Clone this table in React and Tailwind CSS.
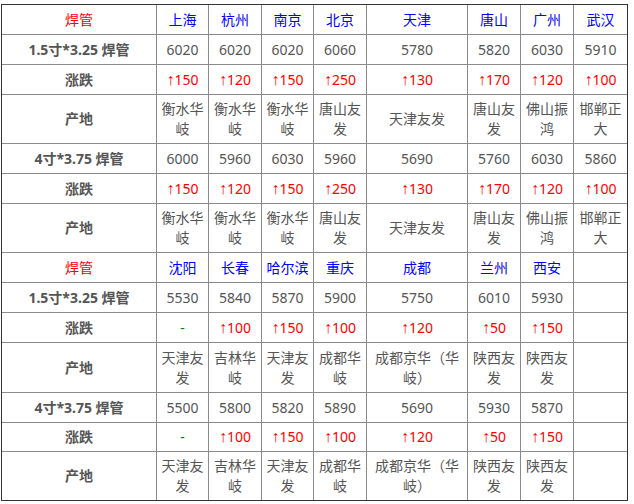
const cols = 'grid-cols-[155px_52px_53px_52px_53px_101px_53px_53px_53px]';

const rows = [
  { h: 'h-[30px]', type: 'head', cells: ['焊管', '上海', '杭州', '南京', '北京', '天津', '唐山', '广州', '武汉'] },
  { h: 'h-[30px]', type: 'val', cells: ['1.5寸*3.25 焊管', '6020', '6020', '6020', '6060', '5780', '5820', '6030', '5910'] },
  { h: 'h-[30px]', type: 'chg', cells: ['涨跌', '150', '120', '150', '250', '130', '170', '120', '100'] },
  { h: 'h-[49px]', type: 'val', cells: ['产地', '衡水华岐', '衡水华岐', '衡水华岐', '唐山友发', '天津友发', '唐山友发', '佛山振鸿', '邯郸正大'] },
  { h: 'h-[30px]', type: 'val', cells: ['4寸*3.75 焊管', '6000', '5960', '6030', '5960', '5690', '5760', '6030', '5860'] },
  { h: 'h-[30px]', type: 'chg', cells: ['涨跌', '150', '120', '150', '250', '130', '170', '120', '100'] },
  { h: 'h-[49px]', type: 'val', cells: ['产地', '衡水华岐', '衡水华岐', '衡水华岐', '唐山友发', '天津友发', '唐山友发', '佛山振鸿', '邯郸正大'] },
  { h: 'h-[30px]', type: 'head', cells: ['焊管', '沈阳', '长春', '哈尔滨', '重庆', '成都', '兰州', '西安', ''] },
  { h: 'h-[30px]', type: 'val', cells: ['1.5寸*3.25 焊管', '5530', '5840', '5870', '5900', '5750', '6010', '5930', ''] },
  { h: 'h-[30px]', type: 'chg', cells: ['涨跌', '-', '100', '150', '100', '120', '50', '150', ''] },
  { h: 'h-[50px]', type: 'val', cells: ['产地', '天津友发', '吉林华岐', '天津友发', '成都华岐', '成都京华（华岐）', '陕西友发', '陕西友发', ''] },
  { h: 'h-[30px]', type: 'val', cells: ['4寸*3.75 焊管', '5500', '5800', '5820', '5890', '5690', '5930', '5870', ''] },
  { h: 'h-[29px]', type: 'chg', cells: ['涨跌', '-', '100', '150', '100', '120', '50', '150', ''] },
  { h: 'h-[48px]', type: 'val', cells: ['产地', '天津友发', '吉林华岐', '天津友发', '成都华岐', '成都京华（华岐）', '陕西友发', '陕西友发', ''] },
];

function Cell({ row, text, i, last, lastRow }) {
  const edge = `${last ? '' : 'border-r'} ${lastRow ? '' : 'border-b'} border-[#8a8a8a]`;
  let content = text;
  let color = 'text-[#555]';
  if (i === 0) {
    if (row.type === 'head') color = 'text-[#ff0000]';
    else color = 'text-[#555] font-bold';
  } else if (row.type === 'head') {
    color = 'text-[#0000ff]';
  } else if (row.type === 'chg') {
    if (text === '-') color = 'text-[#008000]';
    else if (text) {
      color = 'text-[#ff0000]';
      content = (
        <>
          <span className="font-['Liberation_Sans',sans-serif] text-[16px]">↑</span>
          {text}
        </>
      );
    }
  }
  return (
    <div className={`${row.h} ${edge} ${color} flex items-center justify-center text-center px-px leading-[20px] break-all`}>
      <span>{content}</span>
    </div>
  );
}

export default function App() {
  return (
    <div className="w-[634px] h-[504px] bg-white pt-1 pl-px font-['Noto_Sans','Noto_Sans_CJK_SC',sans-serif] text-[14px]">
      <div className={`grid ${cols} w-fit border border-[#333]`}>
        {rows.map((row, r) =>
          row.cells.map((c, i) => (
            <Cell
              key={`${r}-${i}`}
              row={row}
              text={c}
              i={i}
              last={i === row.cells.length - 1}
              lastRow={r === rows.length - 1}
            />
          ))
        )}
      </div>
    </div>
  );
}
